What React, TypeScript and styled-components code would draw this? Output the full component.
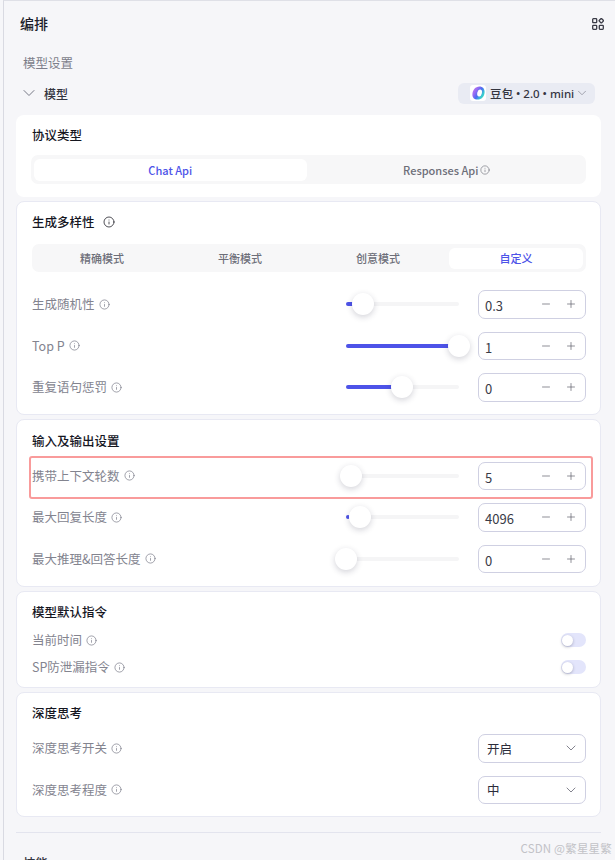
import React from "react";
import styled, { createGlobalStyle } from "styled-components";
import { ChevronDown, Info, Minus, Plus } from "lucide-react";

const Global = createGlobalStyle`
  html, body { margin: 0; padding: 0; height: 860px; overflow: hidden; background: #f6f6f9; }
  body { font-family: "Noto Sans CJK SC", "Noto Sans", sans-serif; color: #1f2030; }
  * { box-sizing: border-box; }
`;

const Page = styled.div`
  position: relative;
  height: 860px;
  margin-left: 3px;
  padding: 0 14px 0 12px;
  border-top: 1px solid #dfe0e7;
  border-left: 1px solid #d9dae2;
  overflow: hidden;
  background: #f6f6f9;
`;
const Header = styled.header`
  display: flex;
  align-items: center;
  justify-content: space-between;
  height: 45px;
  margin-right: -3px;
  padding: 0 0 0 4px;
`;
const PageTitle = styled.h1`
  margin: 0 0 1px;
  font-size: 14px;
  line-height: 20px;
  font-weight: 500;
  color: #1c1d2a;
`;
const SectionLabel = styled.div`
  margin-top: 7px;
  padding-left: 7px;
  font-size: 12.5px;
  line-height: 20px;
  color: #7d7e8a;
`;
const ModelRow = styled.div`
  display: flex;
  align-items: center;
  justify-content: space-between;
  height: 22px;
  margin-top: 9px;
  padding: 0 6px 0 3px;
`;
const ModelToggle = styled.div`
  display: flex;
  align-items: center;
  gap: 5px;
  font-size: 12px;
  font-weight: 500;
  color: #33343f;
  svg { color: #777986; }
`;
const ModelPill = styled.div`
  display: flex;
  align-items: center;
  width: 137px;
  height: 21px;
  padding-left: 12px;
  gap: 4px;
  border-radius: 6px;
  background: #e9ebf3;
  font-family: "Noto Sans", "Noto Sans CJK SC", sans-serif;
  font-size: 11.5px;
  font-weight: 500;
  color: #33343f;
  white-space: nowrap;
  svg.caret { flex-shrink: 0; color: #8b8c98; margin-left: -3px; }
`;
const LogoBox = styled.span`
  flex-shrink: 0;
  display: flex;
  align-items: center;
  justify-content: center;
  width: 16px;
  height: 16px;
  border-radius: 3px;
  background: #fff;
`;
const Card = styled.section<{ $plain?: boolean; $top?: number; $pt?: number; $pb?: number }>`
  margin-top: ${(p) => p.$top ?? 4}px;
  padding: ${(p) => p.$pt ?? 9}px 14px ${(p) => p.$pb ?? 12}px 15px;
  background: #fff;
  border: 1px solid ${(p) => (p.$plain ? "transparent" : "#e8e9f3")};
  border-radius: 8px;
`;
const CardTitle = styled.h2`
  display: flex;
  align-items: center;
  gap: 8px;
  margin: 0;
  font-size: 12.5px;
  line-height: 22px;
  font-weight: 500;
  color: #15161f;
`;
const Segments = styled.div<{ $mt: number; $h: number; $ml?: number }>`
  display: flex;
  gap: 4px;
  margin-top: ${(p) => p.$mt}px;
  margin-left: ${(p) => p.$ml ?? 0}px;
  height: ${(p) => p.$h}px;
  padding: 3.5px 3px;
  border-radius: 7px;
  background: #f7f7f8;
`;
const Segment = styled.div<{ $active?: boolean; $size: number }>`
  flex: 1;
  display: flex;
  align-items: center;
  justify-content: center;
  gap: 2px;
  border-radius: 6px;
  font-size: ${(p) => p.$size}px;
  font-weight: 500;
  color: ${(p) => (p.$active ? "#4d53e8" : "#6d6e78")};
  background: ${(p) => (p.$active ? "#fff" : "transparent")};
`;
const Rows = styled.div<{ $mt: number }>`
  display: flex;
  flex-direction: column;
  gap: 13px;
  margin-top: ${(p) => p.$mt}px;
`;
const Row = styled.div`
  position: relative;
  display: flex;
  align-items: center;
  height: 28.5px;
`;
const Highlight = styled.div`
  position: absolute;
  top: -6px;
  left: -3px;
  right: -7px;
  bottom: -9px;
  border: 2px solid #f99b9b;
  border-radius: 3px;
  pointer-events: none;
`;
const Label = styled.div`
  flex: 1;
  display: flex;
  align-items: center;
  gap: 4px;
  font-size: 12.5px;
  line-height: 18px;
  color: #83848f;
  white-space: nowrap;
  svg { color: #777986; }
`;
const Track = styled.div`
  position: relative;
  width: 113px;
  height: 4px;
  margin-right: 19px;
  border-radius: 2px;
  background: #f5f5f6;
`;
const Fill = styled.div`
  height: 100%;
  border-radius: 2px;
  background: #4d53e8;
`;
const Thumb = styled.div`
  position: absolute;
  top: 50%;
  width: 22px;
  height: 22px;
  transform: translate(-50%, -50%);
  border-radius: 50%;
  background: #fff;
  box-shadow: 0 2px 6px rgba(30, 32, 60, 0.2);
`;
const Field = styled.div`
  display: flex;
  align-items: center;
  width: 108px;
  height: 100%;
  padding: 0 8px 0 6px;
  border: 1px solid #cfd0e2;
  border-radius: 7px;
  background: #fff;
`;
const FieldValue = styled.span`
  flex: 1;
  padding-top: 3px;
  font-size: 13px;
  color: #3a3b47;
`;
const StepGroup = styled.span`
  display: flex;
  align-items: center;
  gap: 13px;
  color: #5f606c;
`;
const SwitchRows = styled.div`
  display: flex;
  flex-direction: column;
  gap: 9px;
  margin-top: 8px;
`;
const SwitchRow = styled.div`
  display: flex;
  align-items: center;
  height: 18px;
`;
const Switch = styled.div`
  display: flex;
  align-items: center;
  width: 25px;
  height: 14px;
  padding-left: 1px;
  border-radius: 7px;
  background: #e3e5fb;
`;
const Knob = styled.div`
  width: 11px;
  height: 11px;
  border-radius: 50%;
  background: #fff;
  box-shadow: 0 1px 3px rgba(30, 32, 60, 0.3);
`;
const SelectValue = styled.span`
  flex: 1;
  padding-left: 2px;
  font-size: 12.5px;
  color: #2b2c3a;
`;
const SelectCaret = styled(ChevronDown)`
  margin-right: -2px;
  color: #70717d;
`;
const Divider = styled.hr`
  margin: 15px 0 0;
  border: 0;
  border-top: 1px solid #e3e4ee;
`;
const NextSection = styled.div`
  margin-top: 20px;
  padding-left: 7px;
  font-size: 12.5px;
  line-height: 20px;
  font-weight: 500;
  color: #33343f;
`;
const Watermark = styled.div`
  position: absolute;
  right: 3px;
  bottom: 4px;
  font-size: 11.5px;
  line-height: 16px;
  letter-spacing: 0.2px;
  color: #c2c2c7;
`;

const Tip = ({ size = 11 }: { size?: number }) => <Info size={size} strokeWidth={1.5} />;

const GridIcon = () => (
  <svg width="12" height="12" viewBox="0 0 12 12" fill="none" stroke="#3a3b47" strokeWidth="1.3">
    <rect x="0.7" y="0.7" width="4" height="4" rx="0.7" />
    <rect x="0.7" y="7.3" width="4" height="4" rx="0.7" />
    <rect x="7.3" y="7.3" width="4" height="4" rx="0.7" />
    <rect x="7.6" y="1" width="3.4" height="3.4" rx="0.6" transform="rotate(45 9.3 2.7)" />
  </svg>
);

const DoubaoLogo = () => (
  <svg width="13" height="14" viewBox="0 0 13 14">
    <defs>
      <linearGradient id="db" x1="0" y1="0.1" x2="1" y2="0.8">
        <stop offset="0" stopColor="#c07cf2" />
        <stop offset="0.3" stopColor="#9a6cf2" />
        <stop offset="0.55" stopColor="#4a6df2" />
        <stop offset="0.8" stopColor="#39c9d0" />
        <stop offset="1" stopColor="#3cdcc0" />
      </linearGradient>
    </defs>
    <path
      d="M7.4 0.4C10.8 0.4 12.8 2.8 12.6 6.2C12.4 10.4 9.6 13.6 5.6 13.6C2.2 13.6 0.2 11.4 0.4 8.2C0.6 4 3.4 0.4 7.4 0.4Z"
      fill="url(#db)"
    />
    <ellipse cx="7.6" cy="7" rx="2.3" ry="3.5" transform="rotate(14 7.6 7)" fill="#fff" />
  </svg>
);

const Stepper = ({ value }: { value: string }) => (
  <Field>
    <FieldValue>{value}</FieldValue>
    <StepGroup>
      <Minus size={12} strokeWidth={1.4} />
      <Plus size={12} strokeWidth={1.4} />
    </StepGroup>
  </Field>
);

const SliderRow = ({
  label,
  value,
  fill,
  thumb,
  marked,
}: {
  label: string;
  value: string;
  fill: number;
  thumb: number;
  marked?: boolean;
}) => (
  <Row>
    <Label>
      {label}
      <Tip />
    </Label>
    <Track>
      <Fill style={{ width: fill }} />
      <Thumb style={{ left: thumb }} />
    </Track>
    <Stepper value={value} />
    {marked && <Highlight />}
  </Row>
);

const SelectRow = ({ label, value }: { label: string; value: string }) => (
  <Row>
    <Label>
      {label}
      <Tip />
    </Label>
    <Field>
      <SelectValue>{value}</SelectValue>
      <SelectCaret size={16} strokeWidth={1.3} />
    </Field>
  </Row>
);

const ToggleRow = ({ label }: { label: string }) => (
  <SwitchRow>
    <Label>
      {label}
      <Tip />
    </Label>
    <Switch>
      <Knob />
    </Switch>
  </SwitchRow>
);

export default function App() {
  return (
    <Page>
      <Global />
      <Header>
        <PageTitle>编排</PageTitle>
        <GridIcon />
      </Header>
      <SectionLabel>模型设置</SectionLabel>
      <ModelRow>
        <ModelToggle>
          <ChevronDown size={20} strokeWidth={1.2} />
          模型
        </ModelToggle>
        <ModelPill>
          <LogoBox>
            <DoubaoLogo />
          </LogoBox>
          豆包 • 2.0 • mini
          <ChevronDown className="caret" size={14} strokeWidth={1.3} />
        </ModelPill>
      </ModelRow>

      <Card $plain $top={11} $pt={8}>
        <CardTitle>协议类型</CardTitle>
        <Segments $mt={9} $h={29} $ml={-1}>
          <Segment $active $size={11}>Chat Api</Segment>
          <Segment $size={11}>
            Responses Api <Tip size={10} />
          </Segment>
        </Segments>
      </Card>

      <Card>
        <CardTitle>
          生成多样性 <Tip size={12} />
        </CardTitle>
        <Segments $mt={11} $h={28}>
          <Segment $size={11}>精确模式</Segment>
          <Segment $size={11}>平衡模式</Segment>
          <Segment $size={11}>创意模式</Segment>
          <Segment $active $size={11}>自定义</Segment>
        </Segments>
        <Rows $mt={18}>
          <SliderRow label="生成随机性" value="0.3" fill={8} thumb={17} />
          <SliderRow label="Top P" value="1" fill={106} thumb={113} />
          <SliderRow label="重复语句惩罚" value="0" fill={50} thumb={56} />
        </Rows>
      </Card>

      <Card $pt={10} $pb={13}>
        <CardTitle>输入及输出设置</CardTitle>
        <Rows $mt={10}>
          <SliderRow label="携带上下文轮数" value="5" fill={0} thumb={5} marked />
          <SliderRow label="最大回复长度" value="4096" fill={4} thumb={14} />
          <SliderRow label="最大推理&回答长度" value="0" fill={0} thumb={0} />
        </Rows>
      </Card>

      <Card $pb={11}>
        <CardTitle>模型默认指令</CardTitle>
        <SwitchRows>
          <ToggleRow label="当前时间" />
          <ToggleRow label="SP防泄漏指令" />
        </SwitchRows>
      </Card>

      <Card>
        <CardTitle>深度思考</CardTitle>
        <Rows $mt={10}>
          <SelectRow label="深度思考开关" value="开启" />
          <SelectRow label="深度思考程度" value="中" />
        </Rows>
      </Card>

      <Divider />
      <NextSection>技能</NextSection>
      <Watermark>CSDN @繁星星繁</Watermark>
    </Page>
  );
}
